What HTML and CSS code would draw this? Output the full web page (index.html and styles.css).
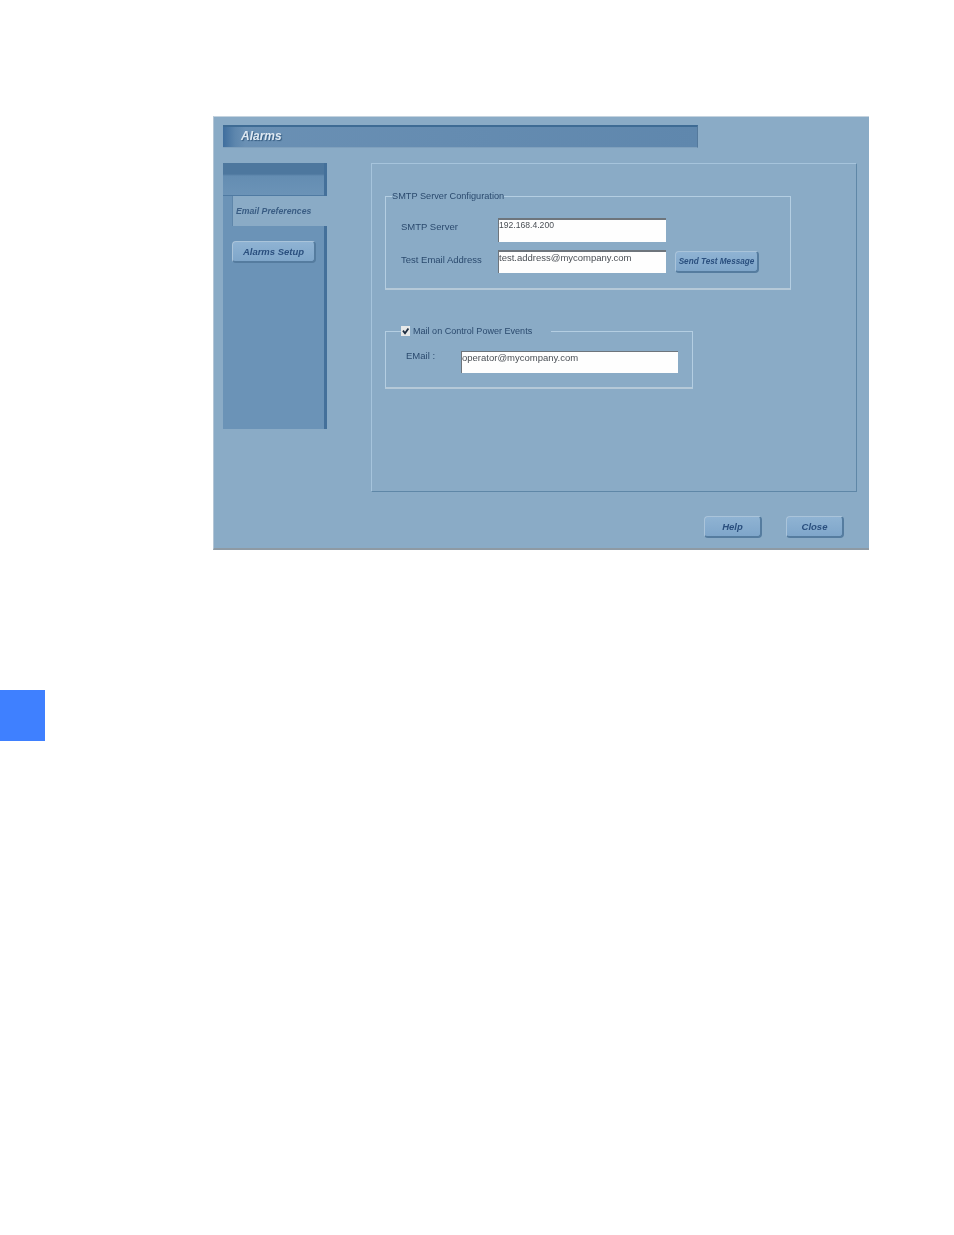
FILE: index.html
```html
<!DOCTYPE html>
<html lang="en">
<head>
  <meta charset="UTF-8" />
  <title>Alarms</title>
  <link rel="stylesheet" href="styles.css">
</head>
<body>
  <div class="window">
    <div class="title-bar"><span class="title-text">Alarms</span></div>

    <div class="main">
      <div class="sidebar">
        <div class="sidebar-top"></div>
        <div class="tab-active">Email Preferences</div>
        <button class="btn btn-side">Alarms Setup</button>
      </div>

      <div class="panel">
        <fieldset class="group group-smtp">
          <legend class="group-legend">SMTP Server Configuration</legend>
          <div class="form-row">
            <label class="field-label">SMTP Server</label>
            <div class="input input-ip">192.168.4.200</div>
          </div>
          <div class="form-row form-row-second">
            <label class="field-label label-test">Test Email Address</label>
            <div class="input input-test">test.address@mycompany.com</div>
            <button class="btn btn-send">Send Test Message</button>
          </div>
        </fieldset>

        <fieldset class="group group-mail">
          <legend class="group-legend legend-check">
            <span class="checkbox">
              <svg viewBox="0 0 9 10" width="9" height="10"><path d="M2 4.6 L4 7.2 L7.4 2.4" fill="none" stroke="#1c2c40" stroke-width="1.8"/></svg>
            </span>
            Mail on Control Power Events
          </legend>
          <div class="form-row">
            <label class="field-label label-email">EMail :</label>
            <div class="input input-email">operator@mycompany.com</div>
          </div>
        </fieldset>
      </div>
    </div>

    <div class="footer">
      <button class="btn btn-footer">Help</button>
      <button class="btn btn-footer">Close</button>
    </div>
  </div>

  <div class="page-tab"></div>
</body>
</html>
```

FILE: styles.css
```css
:root {
  --win-bg: #8aabc6;
  --side-bg: #6b93b7;
  --label: #2b4a6e;
  --btn-text: #2a4f7e;
}
body {
  margin: 0;
  padding: 0;
  background: #fff;
  font-family: "Liberation Sans", Arial, sans-serif;
  height: 1235px;
  overflow: hidden;
}
.window {
  box-sizing: border-box;
  width: 656px;
  height: 434px;
  margin: 116px 0 0 213px;
  padding: 8px 12px 0 9px;
  background: var(--win-bg);
  border-top: 1px solid #c4d3df;
  border-left: 1px solid #b4c6d6;
  border-bottom: 2px solid #8e9aa4;
  filter: blur(0.6px);
}
.title-bar {
  box-sizing: border-box;
  width: 475px;
  height: 23px;
  padding-left: 18px;
  background: linear-gradient(90deg, #3f6e9e 0, #5d86ad 12px, #6a90b4 22px, #5f87ad 100%);
  border-top: 2px solid #3e6b94;
  border-bottom: 1px solid #7fa0bd;
  border-right: 1px solid #54799c;
}
.title-text {
  display: block;
  color: #dfe9f2;
  font-size: 12px;
  font-weight: bold;
  font-style: italic;
  line-height: 18px;
  text-shadow: 1px 1px 1px #33597e;
}
.main {
  display: flex;
  align-items: flex-start;
  margin-top: 15px;
}
.sidebar {
  box-sizing: border-box;
  width: 104px;
  height: 266px;
  background: var(--side-bg);
  border-right: 3px solid #44709a;
}
.sidebar-top {
  height: 33px;
  background: linear-gradient(180deg, #4d779e 0, #4d779e 11px, #648db2 13px, #6b93b7 100%);
  box-sizing: border-box;
  border-bottom: 1px solid #4f7aa2;
}
.tab-active {
  box-sizing: border-box;
  width: 104px;
  height: 30px;
  margin-left: 9px;
  padding-left: 3px;
  background: var(--win-bg);
  border-left: 1px solid #5e86aa;
  color: #3a5d84;
  font-size: 8.7px;
  font-style: italic;
  font-weight: bold;
  line-height: 30px;
  white-space: nowrap;
}
.btn {
  display: block;
  box-sizing: border-box;
  padding: 0;
  background: linear-gradient(180deg, #8fb3d3 0, #7fa6ca 100%);
  border: 1px solid #6f97bb;
  border-top-color: #aac4da;
  border-left-color: #aac4da;
  border-right: 2px solid #557c9f;
  border-bottom: 2px solid #557c9f;
  border-radius: 4px;
  color: var(--btn-text);
  font-family: "Liberation Sans", Arial, sans-serif;
  font-style: italic;
  font-weight: bold;
  white-space: nowrap;
}
.btn-side {
  width: 84px;
  height: 22px;
  margin: 15px 0 0 9px;
  font-size: 9.5px;
}
.panel {
  box-sizing: border-box;
  width: 486px;
  height: 329px;
  margin-left: 44px;
  padding: 26px 0 0 13px;
  border: 1px solid #a6c4dc;
  border-right: 1px solid #5f87a7;
  border-bottom: 1px solid #5f87a7;
}
.group {
  box-sizing: border-box;
  margin: 0;
  padding: 0;
  border: 1px solid #b4cee2;
  border-bottom: 2px solid #b5c9d8;
}
.group-smtp {
  width: 406px;
  height: 100px;
  padding: 16px 0 0 15px;
}
.group-mail {
  width: 308px;
  height: 64px;
  margin-top: 35px;
  padding: 14px 0 0 20px;
}
.group-legend {
  padding: 0;
  margin-left: -9px;
  color: var(--label);
  font-size: 9.2px;
  line-height: 12px;
}
.legend-check {
  display: flex;
  align-items: center;
  gap: 3px;
  margin-left: -5px;
  padding-right: 19px;
  font-size: 9.05px;
}
.checkbox {
  box-sizing: border-box;
  width: 9px;
  height: 10px;
  background: #e6e8e8;
  display: flex;
  line-height: 0;
}
.form-row {
  display: flex;
  align-items: flex-start;
}
.form-row-second {
  margin-top: 8px;
}
.field-label {
  width: 97px;
  flex: none;
  color: var(--label);
  font-size: 9.5px;
  line-height: 18px;
  white-space: nowrap;
}
.label-test {
  line-height: 20px;
}
.label-email {
  width: 55px;
  line-height: 10px;
}
.input {
  box-sizing: border-box;
  width: 168px;
  height: 24px;
  background: #fefefe;
  border-top: 2px solid #6e757c;
  border-left: 1px solid #6e757c;
  color: #4a4f55;
  font-size: 9.5px;
  line-height: 11px;
  white-space: nowrap;
}
.input-ip {
  font-size: 8.6px;
}
.input-test {
  height: 23px;
}
.input-email {
  width: 217px;
  height: 22px;
  border-top-width: 1px;
}
.btn-send {
  width: 84px;
  height: 22px;
  margin: 1px 0 0 9px;
  font-size: 8.2px;
}
.footer {
  display: flex;
  gap: 24px;
  margin: 24px 0 0 481px;
}
.btn-footer {
  width: 58px;
  height: 22px;
  font-size: 9.5px;
}
.page-tab {
  position: absolute;
  left: 0;
  top: 690px;
  width: 45px;
  height: 51px;
  background: #3f80ff;
}
```
